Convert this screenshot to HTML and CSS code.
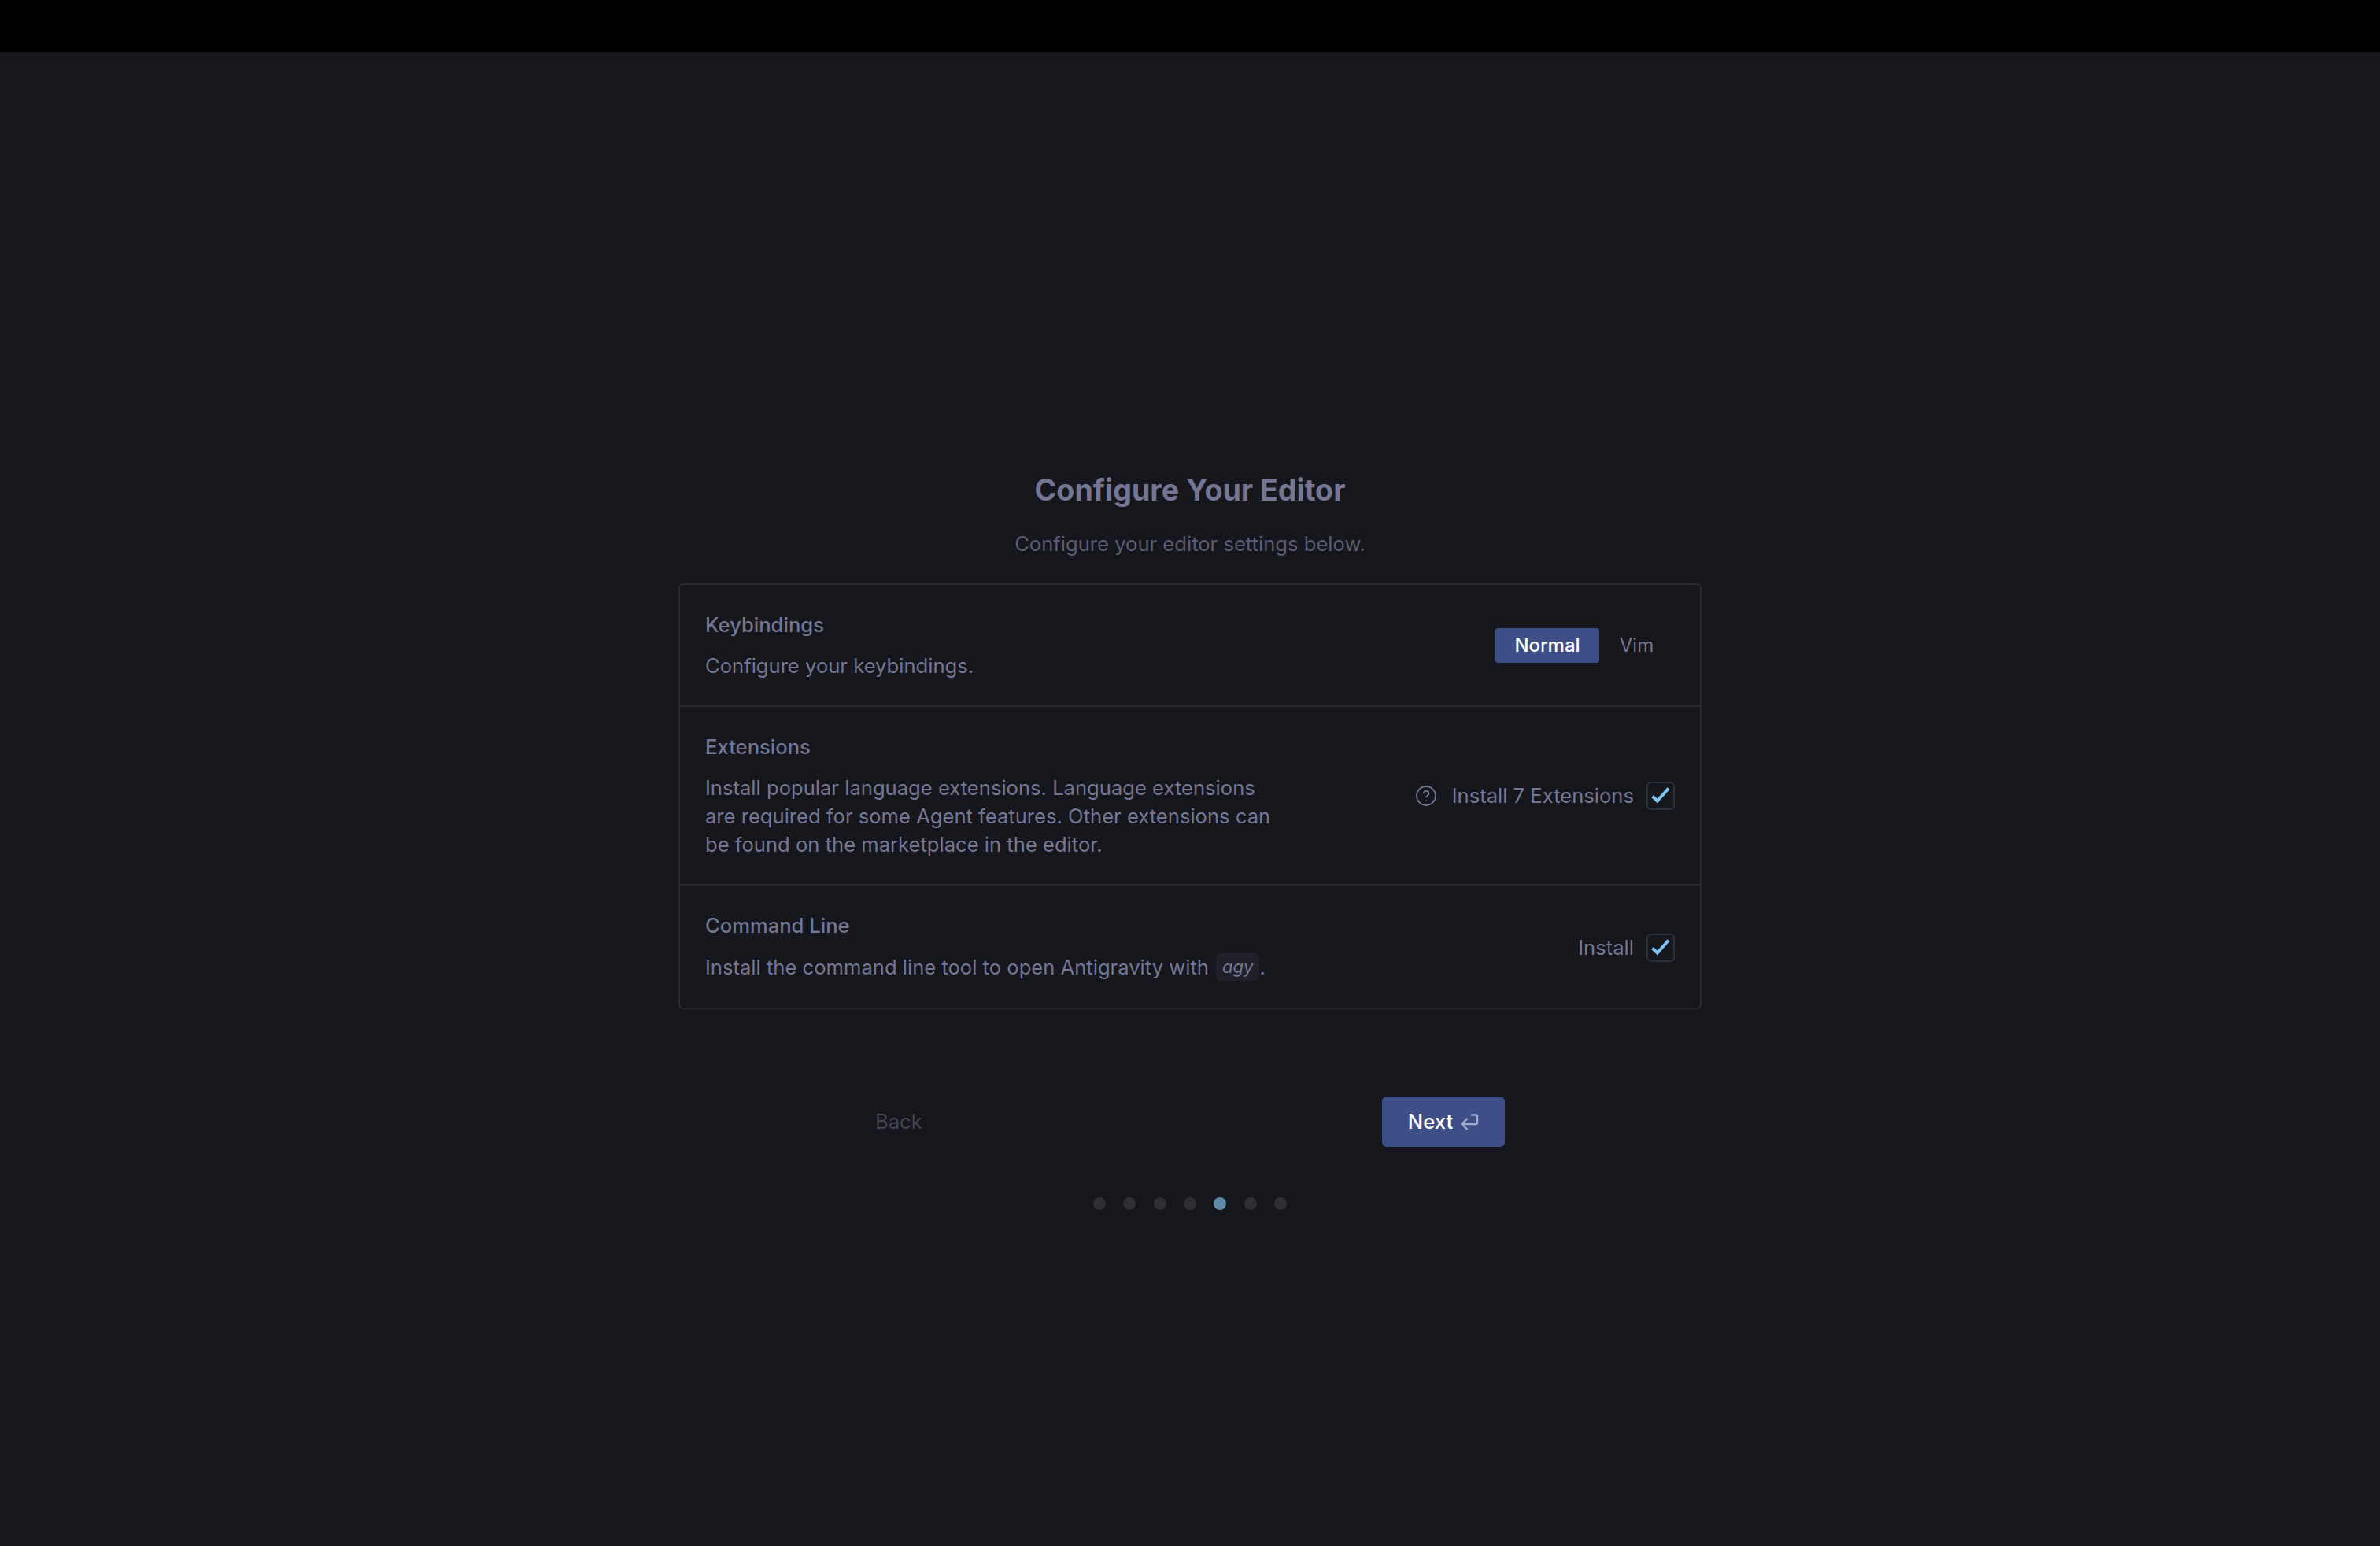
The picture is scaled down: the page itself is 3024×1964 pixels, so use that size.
FILE: index.html
```html
<!DOCTYPE html>
<html lang="en">
<head>
<meta charset="utf-8">
<title>Configure Your Editor</title>
<link rel="stylesheet" href="styles.css">
</head>
<body>
<div class="topbar"></div>
<main class="page">
  <h1 class="title">Configure Your Editor</h1>
  <p class="subtitle">Configure your editor settings below.</p>
  <section class="card">
    <div class="row">
      <div class="info">
        <div class="label">Keybindings</div>
        <div class="desc">Configure your keybindings.</div>
      </div>
      <div class="segment">
        <span class="seg seg-on">Normal</span>
        <span class="seg">Vim</span>
      </div>
    </div>
    <div class="row">
      <div class="info">
        <div class="label">Extensions</div>
        <div class="desc">Install popular language extensions. Language extensions are required for some Agent features. Other extensions can be found on the marketplace in the editor.</div>
      </div>
      <div class="control">
        <svg class="help" viewBox="0 0 26 26" fill="none"><circle cx="13" cy="13" r="12" /><path d="M9.6 10.2c0-2 1.5-3.3 3.500-3.300s3.400 1.200 3.400 3c0 2.700-3.500 2.600-3.500 5.400" /><path d="M13 18.400v1.600" /></svg>
        <span class="control-label">Install 7 Extensions</span>
        <span class="check"><svg viewBox="0 0 36 36" fill="none"><path d="M7.500 18.500l6.300 6L28 8.500" /></svg></span>
      </div>
    </div>
    <div class="row">
      <div class="info">
        <div class="label">Command Line</div>
        <div class="desc">Install the command line tool to open Antigravity with <code class="code">agy</code>.</div>
      </div>
      <div class="control">
        <span class="control-label">Install</span>
        <span class="check"><svg viewBox="0 0 36 36" fill="none"><path d="M7.500 18.500l6.300 6L28 8.500" /></svg></span>
      </div>
    </div>
  </section>
  <div class="footer">
    <span class="back">Back</span>
    <span class="next">Next<svg class="enter" viewBox="0 0 24 22" fill="none"><path d="M14 2.500h6.500a1.500 1.500 0 0 1 1.500 1.500v8a2 2 0 0 1-2 2H3" /><path d="M9.500 7L2.500 14L9.500 21" /></svg></span>
  </div>
  <div class="dots">
    <i class="dot"></i><i class="dot"></i><i class="dot"></i><i class="dot"></i><i class="dot dot-on"></i><i class="dot"></i><i class="dot"></i>
  </div>
</main>
</body>
</html>
```
FILE: styles.css
```css
* { box-sizing: border-box; }
html, body { margin: 0; height: 100%; }
body {
  background: #16171c;
  color: #747694;
  font-family: Inter, "Noto Sans", sans-serif;
  font-size: 25.6px;
  line-height: 36px;
}
.topbar { height: 66px; background: #000; }
.page {
  display: flex;
  flex-direction: column;
  align-items: center;
  padding-top: 529px;
}
.title {
  margin: 0;
  font-size: 37.6px;
  line-height: 56px;
  font-weight: 700;
  color: #747694;
}
.subtitle {
  margin: 22px 0 0;
  height: 36px;
  color: #5a5c76;
}
.card {
  width: 1300px;
  margin-top: 32px;
  border: 2px solid #2a2b31;
  border-radius: 6px;
}
.row {
  display: flex;
  align-items: center;
  justify-content: space-between;
  padding: 33px 32px 32px;
}
.row:last-child { padding-bottom: 33px; }
.row:last-child .desc { margin-top: 17px; }
.row:last-child .control { margin-top: 2px; }
.row + .row { border-top: 2px solid #2a2b31; }
.label { font-weight: 500; }
.desc { margin-top: 16px; width: 730px; }
.segment {
  display: flex;
  background: #18171c;
  border-radius: 6px;
  height: 50px;
  align-items: center;
  margin-right: 1px;
}
.seg {
  display: flex;
  align-items: center;
  justify-content: center;
  width: 95px;
  height: 44px;
  font-size: 24px;
}
.seg-on {
  width: 132px;
  background: #3e4f88;
  color: #fff;
  font-weight: 500;
  border-radius: 4px;
}
.control { display: flex; align-items: center; }
.control-label { margin-right: 16px; }
.help { width: 26px; height: 26px; margin-right: 20px; stroke: #747694; stroke-width: 1.8; }
.check {
  width: 36px;
  height: 36px;
  border: 2px solid #2e3039;
  border-radius: 6px;
  display: block;
  position: relative;
}
.check svg { position: absolute; left: -2px; top: -2px; width: 36px; height: 36px; stroke: #7cc5f2; stroke-width: 4; }
.code {
  display: inline-block;
  font-family: Inter, sans-serif;
  font-style: italic;
  font-size: 22px;
  line-height: 35px;
  height: 35px;
  padding: 0 8px;
  margin-left: 2px;
  background: #202128;
  border-radius: 6px;
  vertical-align: top;
}
.footer {
  width: 800px;
  margin-top: 111px;
  display: flex;
  align-items: center;
  justify-content: space-between;
}
.back { color: #44434f; }
.next {
  display: flex;
  align-items: center;
  justify-content: center;
  gap: 9px;
  width: 156px;
  height: 64px;
  background: #3e4f88;
  color: #fff;
  font-weight: 500;
  border-radius: 6px;
}
.enter { width: 24px; height: 22px; stroke: #a3abca; stroke-width: 2.4; }
.dots { display: flex; gap: 22.4px; margin-top: 64px; }
.dot { width: 16px; height: 16px; border-radius: 50%; background: #2e2f35; display: block; }
.dot-on { background: #5f8bab; }
```
